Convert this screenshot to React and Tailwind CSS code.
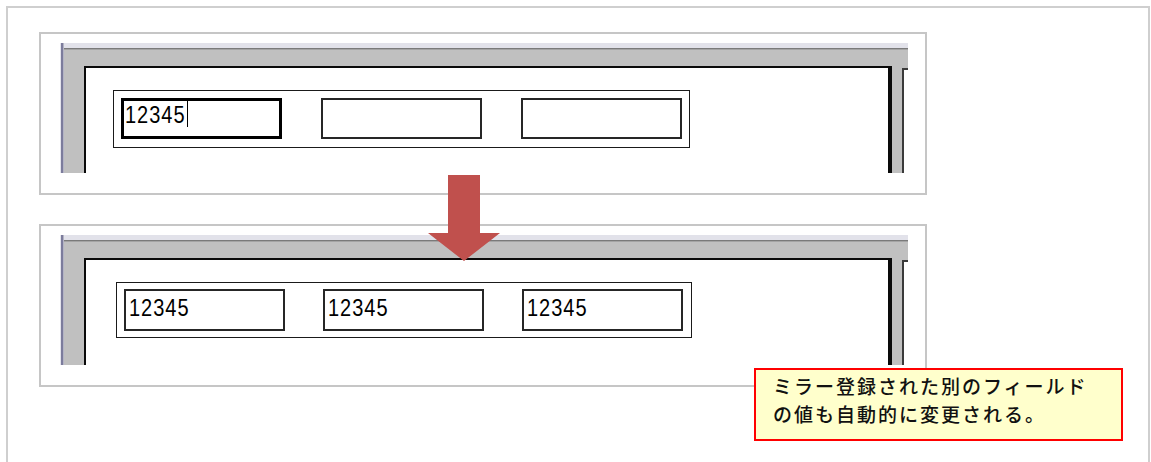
import React from 'react';

const digitFont = { fontFamily: '"Liberation Sans", Arial, sans-serif' };
const jpFont = { fontFamily: '"Noto Sans CJK JP", "Noto Sans", sans-serif' };

function Field({ value, focused, caret, padTop = '' }) {
  return (
    <div
      className={`w-[161px] h-full bg-white overflow-hidden ${
        focused ? 'border-[3px] border-black' : 'border-2 border-[#262626]'
      } ${padTop}`}
    >
      <div className="flex items-start text-[20px] leading-[20px] tracking-[1px] text-black pl-[1px]" style={digitFont}>
        <span className="inline-block origin-top scale-y-[1.22] mt-[1px]">{value}</span>
        {caret && <span className="w-px h-[27px] bg-black ml-[1px] -mt-[1px]" />}
      </div>
    </div>
  );
}

function AppWindow({ children, groupClass }) {
  return (
    <div className="w-[848px] h-[130px] flex bg-[#c0c0c0]">
      {/* left frame stripe */}
      <div className="w-[4px] h-full flex">
        <div className="w-px bg-[#e4e4ec]" />
        <div className="w-[2px] bg-[#7c7c9c]" />
        <div className="w-px bg-[#b4b4c4]" />
      </div>
      <div className="flex-1 flex flex-col">
        <div className="h-[5px] bg-[#e2e2ea]" />
        <div className="h-px bg-[#7a7a7a]" />
        <div className="h-px bg-[#a4a4a4]" />
        <div className="flex-1 flex pt-[16px] pl-[20px]">
          <div className="w-[808px] bg-white border-l-2 border-t-2 border-r-4 border-[#0a0a0a]">
            <div className={groupClass}>{children}</div>
          </div>
          <div className="w-[10px]" />
          <div className="flex-1 mt-[2px] bg-white border-l-2 border-t-2 border-[#3a3a3a]" />
        </div>
      </div>
    </div>
  );
}

function Panel({ children, className = '' }) {
  return (
    <div className={`w-[888px] h-[163px] border-2 border-[#c6c6c6] bg-white pl-[19px] pt-[9px] ${className}`}>
      {children}
    </div>
  );
}

export default function App() {
  return (
    <div className="w-[1151px] h-[462px] overflow-hidden bg-white">
      <div className="relative ml-[6px] mt-[6px] w-[1144px] h-[470px] border-2 border-[#cfcfcf]">
        <div className="pl-[31px] pt-[24px] flex flex-col gap-[29px]">
          <Panel>
            <AppWindow groupClass="ml-[27px] mt-[22px] w-[577px] h-[58px] border border-[#1a1a1a] flex gap-[39px] pl-[7px] pt-[7px] pb-[8px]">
              <Field value="12345" focused caret />
              <Field value="" />
              <Field value="" />
            </AppWindow>
          </Panel>
          <Panel>
            <AppWindow groupClass="ml-[30px] mt-[22px] w-[576px] h-[56px] border border-[#1a1a1a] flex gap-[38px] pl-[7px] py-[6px]">
              <Field value="12345" padTop="pt-[3px] pl-[2px]" />
              <Field value="12345" padTop="pt-[3px] pl-[2px]" />
              <Field value="12345" padTop="pt-[3px] pl-[2px]" />
            </AppWindow>
          </Panel>
        </div>

        {/* arrow between the two states */}
        <svg className="absolute left-[420px] top-[167px] z-10" width="72" height="86" viewBox="0 0 72 86">
          <polygon points="20,0 52,0 52,58 72,58 36,86 0,58 20,58" fill="#c0504d" />
        </svg>

        {/* callout */}
        <div
          className="absolute left-[746px] top-[360px] w-[369px] h-[73px] border-2 border-[#ff0000] bg-[#ffffcc] pl-[17px] pt-[2px] text-[19px] leading-[28px] tracking-[2px] font-medium text-[#111]"
          style={jpFont}
        >
          <p>ミラー登録された別のフィールド</p>
          <p>の値も自動的に変更される。</p>
        </div>
      </div>
    </div>
  );
}
